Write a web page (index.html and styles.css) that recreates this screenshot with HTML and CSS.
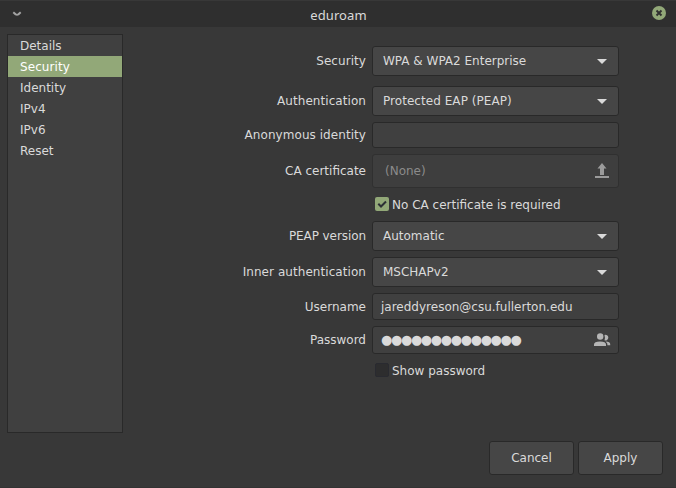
FILE: index.html
```
<!DOCTYPE html>
<html lang="en">
<head>
<meta charset="utf-8">
<title>eduroam</title>
<link rel="stylesheet" href="styles.css">
</head>
<body>
<div class="window">
  <header class="titlebar">
    <svg class="menu-icon" width="10" height="6" viewBox="0 0 10 6"><path d="M1.300 1.300L3.600 3.300Q5 4 6.400 3.300L8.700 1.300" fill="none" stroke="#a2a2a2" stroke-width="2"/></svg>
    <h1 class="title">eduroam</h1>
    <svg class="close-icon" width="14" height="14" viewBox="0 0 14 14"><circle cx="7" cy="7" r="7" fill="#92a878"/><path d="M4.500 4.500l5 5M9.500 4.500l-5 5" stroke="#2f2f2f" stroke-width="1.900"/></svg>
  </header>
  <div class="body">
    <nav class="sidebar">
      <div class="item">Details</div>
      <div class="item selected">Security</div>
      <div class="item">Identity</div>
      <div class="item">IPv4</div>
      <div class="item">IPv6</div>
      <div class="item">Reset</div>
    </nav>
    <main class="main">
      <div class="form">
        <div class="row gap-large"><span class="label wide">Security</span><div class="field combo"><span>WPA &amp; WPA2 Enterprise</span><i class="arrow"></i></div></div>
        <div class="row"><span class="label wide">Authentication</span><div class="field combo"><span class="loose">Protected EAP (PEAP)</span><i class="arrow"></i></div></div>
        <div class="row"><span class="label wide">Anonymous identity</span><div class="field entry"></div></div>
        <div class="row gap-check"><span class="label">CA certificate</span><div class="field file"><span>(None)</span>
          <svg width="14" height="16" viewBox="0 0 14 16"><path d="M7 0l4.500 5.500H9V12H5V5.500H2.500zM0 13h14v2H0z" fill="#9b9b9b"/></svg></div></div>
        <div class="row check-row gap-after-check"><span class="label"></span><div class="check"><span class="box checked"><svg width="14" height="14" viewBox="0 0 14 14"><path d="M3.300 6.800L6 9.500l5-5" fill="none" stroke="#2c2f35" stroke-width="2"/></svg></span><span class="caption">No CA certificate is required</span></div></div>
        <div class="row"><span class="label narrow">PEAP version</span><div class="field combo"><span>Automatic</span><i class="arrow"></i></div></div>
        <div class="row"><span class="label wide">Inner authentication</span><div class="field combo"><span>MSCHAPv2</span><i class="arrow"></i></div></div>
        <div class="row"><span class="label">Username</span><div class="field entry user"><span>jareddyreson@csu.fullerton.edu</span></div></div>
        <div class="row gap-show"><span class="label">Password</span><div class="field entry password"><span class="dots">●●●●●●●●●●●●●●</span>
          <svg width="17" height="14" viewBox="0 0 17 14"><g fill="#b5b5b5"><circle cx="6.200" cy="3.500" r="3.200"/><path d="M10.500 2a2.800 2.800 0 1 1 0 5.200q.8-2.600 0-5.200zM0 13v-1.500Q0 8.500 6 8.500t6 3V13zM11.500 8.400Q16.200 8.500 16.200 11v1.200h-2.700Q13.800 10 11.500 8.400z"/></g></svg></div></div>
        <div class="row check-row"><span class="label"></span><div class="check"><span class="box"></span><span class="caption">Show password</span></div></div>
      </div>
      <footer class="actions"><button class="button">Cancel</button><button class="button">Apply</button></footer>
    </main>
  </div>
</div>
</body>
</html>
```
FILE: styles.css
```
* { box-sizing: border-box; }
body { margin: 0; background: #383838; color: #dadada; font: 12px/16px "DejaVu Sans", sans-serif; }
.window { width: 676px; height: 488px; display: flex; flex-direction: column; border-bottom: 1px solid #333; overflow: hidden; }
.titlebar { height: 27px; flex: none; display: flex; align-items: center; justify-content: space-between; padding: 0 10px 0 12px; background: #2f2f2f; border-top: 1px solid #383838; }
.title { margin: 2px 0 0 3px; font: 13px/18px "Noto Sans", sans-serif; letter-spacing: .1px; }
.menu-icon, .close-icon { display: block; }
.menu-icon { margin-top: -1px; }
.close-icon { margin-top: -2px; }
.body { flex: 1; display: flex; padding: 7px 13px 0 7px; }
.sidebar { width: 116px; height: 399px; flex: none; background: #404040; border: 1px solid #292929; }
.item { height: 21px; padding: 3px 12px 0; line-height: 17px; }
.item.selected { background: #92a878; color: #fff; letter-spacing: .08px; }
.main { flex: 1; display: flex; flex-direction: column; justify-content: space-between; padding: 12px 0 12px; }
.row { display: grid; grid-template-columns: 243px 247px; column-gap: 6px; align-items: center; margin-bottom: 6px; }
.row.gap-large { margin-bottom: 10px; }
.row.gap-check { margin-bottom: 9px; }
.row.gap-after-check { margin-bottom: 10px; }
.row.gap-show { margin-bottom: 9px; }
.label { text-align: right; white-space: nowrap; }
.label.wide { letter-spacing: .06px; }
.label.narrow { letter-spacing: -.08px; }
.field { display: flex; align-items: center; justify-content: space-between; height: 30px; padding: 0 10px; background: #404040; border: 1px solid #292929; border-radius: 3px; white-space: nowrap; }
.combo { background: #464646; padding-right: 11px; }
.loose { letter-spacing: .05px; }
.arrow { border: 5px solid transparent; border-top-color: #dadada; border-bottom: 0; }
.entry { height: 26px; padding: 0 8px; }
.user { height: 27px; }
.password { height: 28px; padding-right: 7px; }
.file { height: 34px; padding: 0 9px 0 12px; background: #3e3e3e; border-color: #303030; color: #8b8b8b; }
.dots { font-size: 13px; letter-spacing: -1.38px; }
.check-row { height: 14px; }
.check { display: flex; align-items: center; gap: 3px; height: 14px; padding-left: 3px; white-space: nowrap; }
.caption { margin-top: 2px; }
.box { width: 14px; height: 14px; border-radius: 2px; background: #2d2d2e; border: 1px solid #292a30; }
.box.checked { background: #92a878; border: 0; }
.box svg { display: block; }
.actions { display: flex; justify-content: flex-end; gap: 4px; }
.button { width: 85px; height: 34px; padding: 0; background: #464646; border: 1px solid #292929; border-radius: 3px; color: inherit; font: inherit; }
```
